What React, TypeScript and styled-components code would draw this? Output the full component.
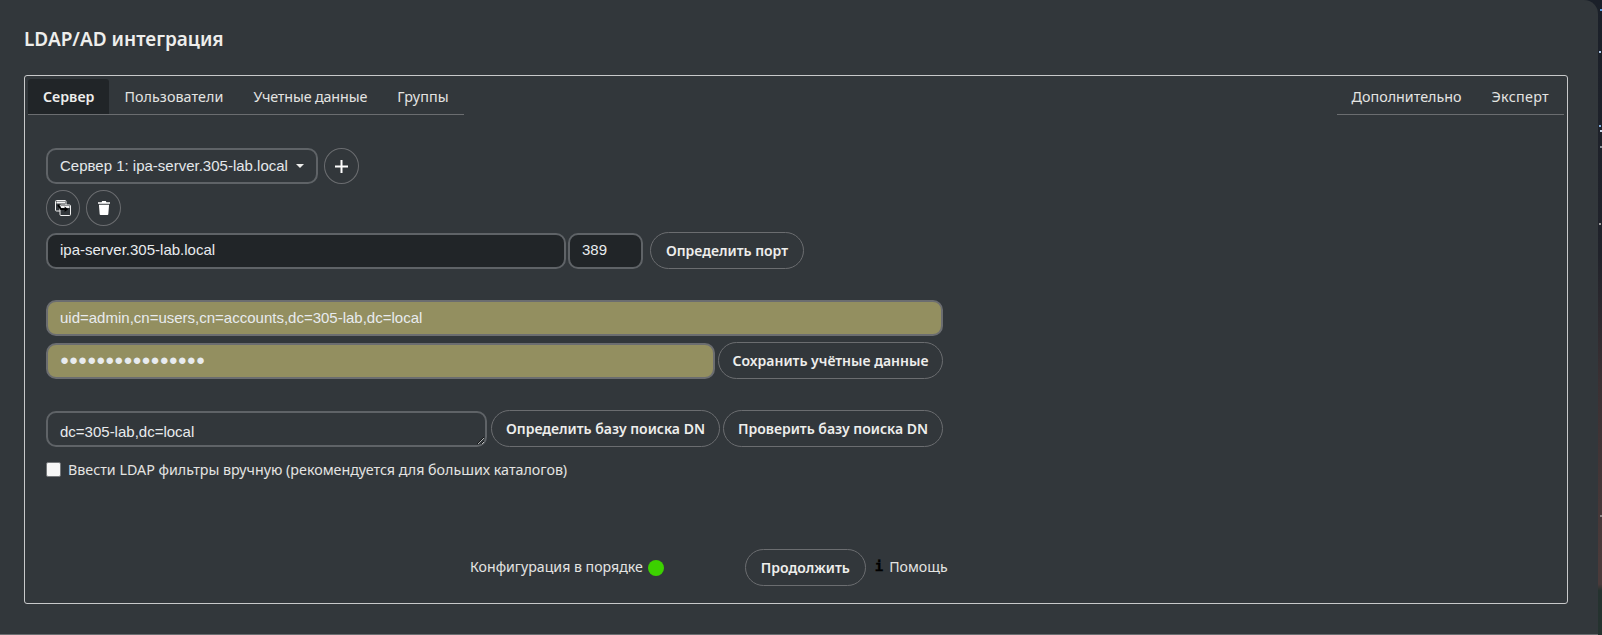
import React from "react";
import styled, { createGlobalStyle } from "styled-components";

const Global = createGlobalStyle`
  html, body { margin: 0; padding: 0; height: 635px; overflow: hidden; background: #1c2028; }
  #root { height: 635px; }
  * { box-sizing: border-box; }
`;

const speck = (c: string) => `linear-gradient(${c}, ${c})`;

const Desktop = styled.div`
  width: 1602px;
  height: 635px;
  background-color: #1c2028;
  background-repeat: no-repeat;
  background-image:
    ${speck("#5f9fe0")}, ${speck("#a9c6e6")}, ${speck("#7fa8d8")}, ${speck("#c9d6e6")},
    ${speck("#8a8f96")}, ${speck("#9a9a9a")}, ${speck("#8c8584")},
    linear-gradient(180deg, #1b2029 0%, #20222a 40%, #3a3033 60%, #4a3a3a 88%, #4a3a3a 92%, #25322f 93%, #25322f 100%);
  background-size: 2px 2px, 2px 2px, 2px 2px, 2px 2px, 2px 2px, 2px 2px, 2px 2px, 100% 100%;
  background-position:
    1600px 9px, 1599px 51px, 1599px 125px, 1600px 130px,
    1600px 146px, 1599px 223px, 1600px 515px, 0 0;
`;

const Window = styled.main`
  width: 1598px;
  height: 635px;
  background: #32373b;
  border-top-right-radius: 14px;
  border-bottom: 1px solid #6c6e71;
  padding: 27px 34px 0 24px;
  font-family: "Noto Sans", sans-serif;
  color: #eeeeec;
`;

const Title = styled.h1`
  margin: 0 0 24px;
  font-size: 19px;
  line-height: 24px;
  font-weight: 600;
  height: 24px;
`;

const Panel = styled.section`
  width: 1544px;
  height: 529px;
  border: 1px solid #c8c9ca;
  border-radius: 3px;
  padding: 3px;
  display: flex;
  flex-direction: column;
`;

const TabBar = styled.nav`
  display: flex;
  justify-content: space-between;
`;

const TabGroup = styled.ul`
  display: flex;
  margin: 0;
  padding: 0;
  list-style: none;
  border-bottom: 1px solid #6b6d70;
  height: 36px;
`;

const Tab = styled.li<{ $active?: boolean; $spacing?: number }>`
  padding: 0 15px;
  line-height: 36px;
  font-size: ${(p) => (p.$active ? 14.2 : 14.3)}px;
  letter-spacing: ${(p) => p.$spacing ?? 0}px;
  height: 35px;
  white-space: nowrap;
  border-radius: 3px 3px 0 0;
  font-weight: ${(p) => (p.$active ? 600 : 400)};
  background: ${(p) => (p.$active ? "#212528" : "transparent")};
  color: ${(p) => (p.$active ? "#eeeeec" : "#e4e4e2")};
`;

const Form = styled.form`
  padding: 33px 18px 0;
  flex: 1;
  display: flex;
  flex-direction: column;
  margin: 0;
`;

const Row = styled.div<{ $bottom?: number; $width?: number }>`
  display: flex;
  align-items: center;
  width: ${(p) => (p.$width ? `${p.$width}px` : "auto")};
  margin-bottom: ${(p) => p.$bottom ?? 0}px;
`;

const fieldFont = `font-family: "Liberation Sans", Arial, sans-serif; font-size: 15px;`;

const Select = styled.div`
  ${fieldFont}
  width: 272px;
  height: 36px;
  border: 2px solid #5f6367;
  border-radius: 10px;
  padding: 0 12px 1px;
  display: flex;
  align-items: center;
  justify-content: space-between;
  color: #e4e7ea;
  white-space: nowrap;
`;

const Caret = styled.span`
  width: 0;
  height: 0;
  border-left: 4.5px solid transparent;
  border-right: 4.5px solid transparent;
  border-top: 4.5px solid #eeeeec;
`;

const IconButton = styled.button<{ $left?: number; $width?: number }>`
  width: ${(p) => p.$width ?? 35}px;
  height: 36px;
  padding: 0;
  margin-left: ${(p) => p.$left ?? 0}px;
  border: 1px solid #6b6d70;
  border-radius: 50%;
  background: transparent;
  color: #fff;
  display: flex;
  align-items: center;
  justify-content: center;
`;

const TextField = styled.input<{ $width?: number; $left?: number; $fill?: "dark" | "auto" }>`
  ${fieldFont}
  flex: ${(p) => (p.$width ? "none" : 1)};
  width: ${(p) => (p.$width ? `${p.$width}px` : "auto")};
  min-width: 0;
  height: 36px;
  margin-left: ${(p) => p.$left ?? 0}px;
  padding: 0 12px 2px;
  border: 2px solid ${(p) => (p.$fill === "auto" ? "#6b6d70" : "#5f6367")};
  border-radius: 10px;
  outline: none;
  color: #e8ebee;
  background: ${(p) => (p.$fill === "auto" ? "#938f60" : "#212528")};
`;

const Area = styled.textarea`
  ${fieldFont}
  width: 441px;
  height: 36px;
  padding: 9px 12px 0;
  line-height: 20px;
  border: 2px solid #5f6367;
  border-radius: 10px;
  outline: none;
  overflow: hidden;
  color: #e8ebee;
  background: transparent;
  flex: none;
`;

const Action = styled.button<{ $left?: number; $width: number }>`
  font-family: "Noto Sans", sans-serif;
  font-size: 14px;
  font-weight: 600;
  color: #eeeeec;
  background: transparent;
  width: ${(p) => p.$width}px;
  height: 37px;
  margin-left: ${(p) => p.$left ?? 0}px;
  padding: 0;
  border: 1px solid #6b6d70;
  border-radius: 19px;
  white-space: nowrap;
  flex: none;
`;

const CheckLine = styled.label`
  display: flex;
  align-items: center;
  font-size: 14.27px;
  height: 20px;
  color: #e4e4e2;
`;

const Check = styled.input`
  appearance: none;
  width: 15px;
  height: 15px;
  margin: 0 7px 0 0;
  border-radius: 2px;
  border: 1px solid #75787b;
  background: #f7f7f7;
`;

const Footer = styled.footer`
  display: flex;
  align-items: center;
  height: 37px;
  margin-top: 70px;
  padding-left: 424px;
  font-size: 14.15px;
  color: #e4e4e2;
`;

const FooterText = styled.span`
  margin-bottom: 2px;
`;

const StatusDot = styled.span`
  width: 16px;
  height: 16px;
  border-radius: 50%;
  background: #3cd100;
  margin-left: 5px;
  margin-right: 81px;
`;

const InfoMark = styled.span`
  font-family: "DejaVu Sans Mono", monospace;
  font-weight: 700;
  font-size: 14px;
  color: #000;
  -webkit-text-stroke: 0.3px #000;
  margin: 0 6px 0 9px;
  position: relative;
  top: -2px;
`;

export default function App() {
  return (
    <Desktop>
      <Global />
      <Window>
        <Title>LDAP/AD интеграция</Title>
        <Panel>
          <TabBar>
            <TabGroup>
              <Tab $active>Сервер</Tab>
              <Tab $spacing={0.08}>Пользователи</Tab>
              <Tab $spacing={-0.13}>Учетные данные</Tab>
              <Tab $spacing={0.2}>Группы</Tab>
            </TabGroup>
            <TabGroup>
              <Tab>Дополнительно</Tab>
              <Tab $spacing={0.3}>Эксперт</Tab>
            </TabGroup>
          </TabBar>
          <Form>
            <Row $bottom={6}>
              <Select>
                Сервер 1: ipa-server.305-lab.local
                <Caret />
              </Select>
              <IconButton type="button" $left={6} aria-label="Добавить">
                <svg width="13" height="13" viewBox="0 0 13 13">
                  <path d="M6.5 0v13M0 6.5h13" stroke="currentColor" strokeWidth="2" />
                </svg>
              </IconButton>
            </Row>
            <Row $bottom={6}>
              <IconButton type="button" $width={34} aria-label="Копировать">
                <svg width="16" height="16" viewBox="0 0 16 16" fill="none">
                  <rect x="0.5" y="0.5" width="10.5" height="10.5" rx="1" fill="#32373b" stroke="#f2f2f2" />
                  <rect x="1.5" y="1.5" width="8.5" height="2" fill="#f2f2f2" />
                  <rect x="5" y="5" width="10.5" height="10.5" rx="1" fill="#32373b" stroke="#f2f2f2" />
                  <rect x="6" y="6" width="8.5" height="2" fill="#f2f2f2" />
                  <path d="M3 5l3 4.2h6" stroke="#000" strokeWidth="1.8" />
                  <path d="M9.6 6.4l3.6 2.8-3.6 2.8z" fill="#000" />
                </svg>
              </IconButton>
              <IconButton type="button" $left={6} aria-label="Удалить">
                <svg width="12" height="14" viewBox="0 0 13 15">
                  <path d="M4.5 0h4l.6 1.2H13v1.6H0V1.2h3.9zM1 4h11l-.8 10a1 1 0 0 1-1 1H2.8a1 1 0 0 1-1-1z" fill="#fff" />
                </svg>
              </IconButton>
            </Row>
            <Row $bottom={31}>
              <TextField $width={520} $fill="dark" readOnly value="ipa-server.305-lab.local" />
              <TextField $width={75} $left={2} $fill="dark" readOnly value="389" />
              <Action type="button" $left={7} $width={154}>Определить порт</Action>
            </Row>
            <Row $width={897} $bottom={6}>
              <TextField $fill="auto" readOnly value="uid=admin,cn=users,cn=accounts,dc=305-lab,dc=local" />
            </Row>
            <Row $width={897} $bottom={31}>
              <TextField $fill="auto" readOnly value="●●●●●●●●●●●●●●●●" />
              <Action type="button" $left={3} $width={225}>Сохранить учётные данные</Action>
            </Row>
            <Row $width={897} $bottom={12}>
              <Area readOnly value="dc=305-lab,dc=local" />
              <Action type="button" $left={4} $width={229}>Определить базу поиска DN</Action>
              <Action type="button" $left={3} $width={220}>Проверить базу поиска DN</Action>
            </Row>
            <CheckLine>
              <Check type="checkbox" />
              Ввести LDAP фильтры вручную (рекомендуется для больших каталогов)
            </CheckLine>
            <Footer>
              <FooterText>Конфигурация в порядке</FooterText>
              <StatusDot />
              <Action type="button" $width={121}>Продолжить</Action>
              <InfoMark>i</InfoMark>
              <FooterText>Помощь</FooterText>
            </Footer>
          </Form>
        </Panel>
      </Window>
    </Desktop>
  );
}
